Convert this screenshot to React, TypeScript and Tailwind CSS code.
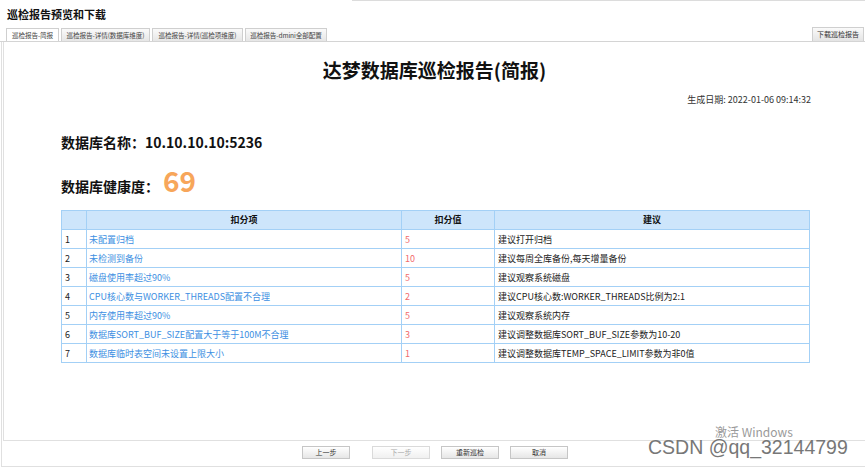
import React from "react";

const rows = [
  ["1", "未配置归档", "5", "建议打开归档"],
  ["2", "未检测到备份", "10", "建议每周全库备份,每天增量备份"],
  ["3", "磁盘使用率超过90%", "5", "建议观察系统磁盘"],
  ["4", "CPU核心数与WORKER_THREADS配置不合理", "2", "建议CPU核心数:WORKER_THREADS比例为2:1"],
  ["5", "内存使用率超过90%", "5", "建议观察系统内存"],
  ["6", "数据库SORT_BUF_SIZE配置大于等于100M不合理", "3", "建议调整数据库SORT_BUF_SIZE参数为10-20"],
  ["7", "数据库临时表空间未设置上限大小", "1", "建议调整数据库TEMP_SPACE_LIMIT参数为非0值"],
];

const tabs: [string, string][] = [
  ["巡检报告-简报", "w-[53px]"],
  ["巡检报告-详情(数据库维度)", "w-[89px]"],
  ["巡检报告-详情(巡检项维度)", "w-[91px]"],
  ["巡检报告-dmini全部配置", "w-[82px]"],
];

export default function App() {
  return (
    <div className="relative w-[865px] h-[468px] overflow-hidden bg-white text-[#222] font-['Noto_Sans_CJK_SC','Noto_Sans',sans-serif]">
      <div className="h-px ml-[352px] bg-[#dcdcdc]" />
      <div className="h-[26px] pl-[7px] pt-[6px] text-[11px] font-bold leading-[14px] text-[#111]">巡检报告预览和下载</div>
      {/* tab bar */}
      <div className="flex items-end h-[15px] border-b border-[#d4d4d4]">
        <div className="flex items-end gap-[2px] pl-[6px]">
          {tabs.map(([t, w], i) => (
            <div
              key={t}
              className={
                "h-[13px] border border-b-0 border-[#cfcfcf] text-[6.6px] leading-[12px] text-center whitespace-nowrap overflow-hidden tracking-[-0.1px] " +
                w +
                " " +
                (i === 0 ? "bg-white text-[#444]" : "bg-gradient-to-b from-[#fafafa] to-[#e6e6e6] text-[#444]")
              }
            >
              {t}
            </div>
          ))}
        </div>
        <div className="flex-1" />
        <div className="h-[14px] w-[52px] mr-px border border-b-0 border-[#cfcfcf] bg-gradient-to-b from-[#fafafa] to-[#e4e4e4] text-[7px] leading-[13px] text-center text-[#333]">
          下载巡检报告
        </div>
      </div>
      {/* main area */}
      <div className="ml-px border-l border-b border-[#e0e0e0] h-[425px] flex flex-col">
        <div className="ml-px border-l border-b border-[#e0e0e0] h-[399px] flex flex-col">
          <div className="pt-[14px] text-center text-[19px] leading-[28px] font-bold text-[#111]">达梦数据库巡检报告(简报)</div>
          <div className="mt-[10px] pr-[54px] text-right text-[9px] leading-[12px] text-[#333]">生成日期: 2022-01-06 09:14:32</div>
          <div className="mt-[26px] pl-[57px] text-[14px] leading-[20px] font-bold text-[#111]">数据库名称：10.10.10.10:5236</div>
          <div className="mt-[12px] pl-[57px] flex items-end h-[32px]">
            <span className="text-[14px] leading-[20px] font-bold text-[#111]">数据库健康度：</span>
            <span className="text-[28px] leading-[32px] font-bold text-[#f7a65a] ml-[4px]">69</span>
          </div>
          <div className="mt-[14px] ml-[57px] w-[748px]">
            <table className="w-[748px] table-fixed border-collapse text-[9px]">
              <colgroup>
                <col className="w-[25px]" />
                <col className="w-[315px]" />
                <col className="w-[93px]" />
                <col className="w-[315px]" />
              </colgroup>
              <thead>
                <tr className="h-[19px] bg-[#cde5fb]">
                  <th className="border border-[#a3d0f6] p-0"></th>
                  <th className="border border-[#a3d0f6] p-0 font-bold text-center text-[#111]">扣分项</th>
                  <th className="border border-[#a3d0f6] p-0 font-bold text-center text-[#111]">扣分值</th>
                  <th className="border border-[#a3d0f6] p-0 font-bold text-center text-[#111]">建议</th>
                </tr>
              </thead>
              <tbody>
                {rows.map((r) => (
                  <tr key={r[0]} className="h-[19px]">
                    <td className="border border-[#a3d0f6] pl-[3px] py-0 leading-[17px] text-[#222]">{r[0]}</td>
                    <td className="border border-[#a3d0f6] pl-[2px] py-0 leading-[17px] text-[#3d8fe2] whitespace-nowrap">{r[1]}</td>
                    <td className="border border-[#a3d0f6] pl-[3px] py-0 leading-[17px] text-[#f26b6b]">{r[2]}</td>
                    <td className="border border-[#a3d0f6] pl-[3px] py-0 leading-[17px] text-[#222] whitespace-nowrap">{r[3]}</td>
                  </tr>
                ))}
              </tbody>
            </table>
          </div>
        </div>
        {/* button bar */}
        <div className="flex items-start h-[25px] pt-[5px] pl-[300px]">
          <button className="h-[13px] w-[48px] border border-[#c6c6c6] bg-gradient-to-b from-white to-[#e6e6e6] text-[7px] leading-[11px] text-[#333]">上一步</button>
          <button className="ml-[22px] h-[13px] w-[58px] border border-[#dadada] bg-gradient-to-b from-white to-[#f0f0f0] text-[7px] leading-[11px] text-[#aaa]">下一步</button>
          <button className="ml-[11px] h-[13px] w-[58px] border border-[#c6c6c6] bg-gradient-to-b from-white to-[#e6e6e6] text-[7px] leading-[11px] text-[#333]">重新巡检</button>
          <button className="ml-[11px] h-[13px] w-[58px] border border-[#c6c6c6] bg-gradient-to-b from-white to-[#e6e6e6] text-[7px] leading-[11px] text-[#333]">取消</button>
        </div>
      </div>
      {/* watermarks */}
      <div className="absolute left-[715px] top-[424px] text-[12px] leading-[16px] text-[#9a9a9a]">激活 Windows</div>
      <div className="absolute left-[648px] top-[436px] text-[19.5px] leading-[22px] text-[#777] font-['Liberation_Sans',sans-serif] whitespace-nowrap">CSDN @qq_32144799</div>
    </div>
  );
}
